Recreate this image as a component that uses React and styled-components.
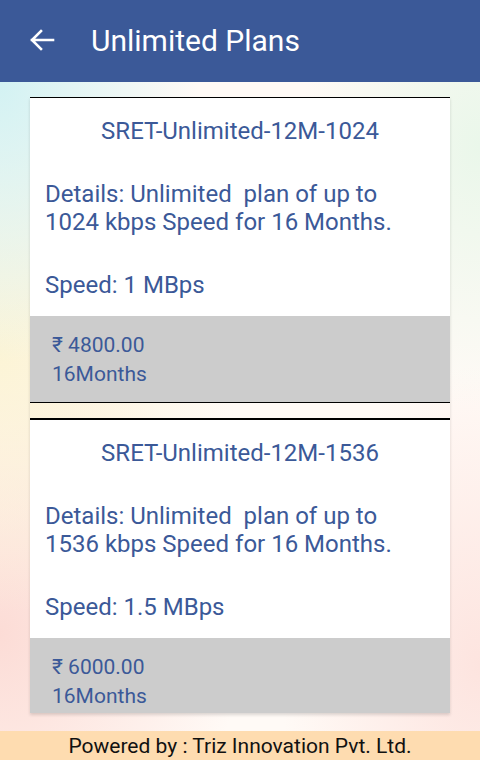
import React from "react";
import styled, { createGlobalStyle } from "styled-components";

const plans = [
  {
    id: 1,
    name: "SRET-Unlimited-12M-1024",
    details: "Details: Unlimited  plan of up to 1024 kbps Speed for 16 Months.",
    speed: "Speed: 1 MBps",
    price: "4800.00",
    validity: "16Months",
  },
  {
    id: 2,
    name: "SRET-Unlimited-12M-1536",
    details: "Details: Unlimited  plan of up to 1536 kbps Speed for 16 Months.",
    speed: "Speed: 1.5 MBps",
    price: "6000.00",
    validity: "16Months",
  },
];

const App = () => {
  return (
    <>
      <GlobalStyle />
      <Screen>
        <AppBar>
          <BackButton aria-label="back">
            <svg width="26" height="22" viewBox="0 0 26 22" fill="none">
              <path
                d="M24 11H3M12 2L3 11l9 9"
                stroke="#fff"
                strokeWidth="2.6"
                strokeLinecap="square"
              />
            </svg>
          </BackButton>
          <Title>Unlimited Plans</Title>
        </AppBar>

        <Content>
          <Viewport>
            {plans.map((plan, i) => (
              <PlanCard key={plan.id} $first={i === 0}>
                <PlanBody>
                  <PlanName>{plan.name}</PlanName>
                  <PlanDetails>{plan.details}</PlanDetails>
                  <PlanSpeed>{plan.speed}</PlanSpeed>
                </PlanBody>
                <PriceBox>
                  <Price>₹ {plan.price}</Price>
                  <Validity>{plan.validity}</Validity>
                </PriceBox>
              </PlanCard>
            ))}
          </Viewport>
        </Content>

        <Footer>Powered by : Triz Innovation Pvt. Ltd.</Footer>
      </Screen>
    </>
  );
};

const GlobalStyle = createGlobalStyle`
  html, body {
    margin: 0;
    padding: 0;
  }
  body {
    font-family: Roboto, "Liberation Sans", sans-serif;
  }
`;

const Screen = styled.div`
  width: 480px;
  height: 760px;
  display: flex;
  flex-direction: column;
  overflow: hidden;
`;

const AppBar = styled.header`
  height: 82px;
  flex-shrink: 0;
  display: flex;
  align-items: center;
  background-color: #3b5998;
  padding-left: 29px;
  box-sizing: border-box;
`;

const BackButton = styled.div`
  width: 26px;
  height: 22px;
  display: flex;
  margin-top: -3px;
`;

const Title = styled.h1`
  margin: -2px 0 0 36px;
  font-size: 30px;
  font-weight: 400;
  color: #fff;
`;

const Content = styled.main`
  flex: 1;
  min-height: 0;
  display: flex;
  flex-direction: column;
  padding: 15px 30px 18px;
  box-sizing: border-box;
  background:
    radial-gradient(ellipse 200px 280px at 0% 0%, #d3f2f3 0%, rgba(211, 242, 243, 0) 100%),
    radial-gradient(ellipse 240px 260px at 0% 42%, #fcf4d6 0%, rgba(252, 244, 214, 0) 100%),
    radial-gradient(ellipse 240px 300px at 0% 85%, #fcdcd6 0%, rgba(252, 220, 214, 0) 100%),
    radial-gradient(ellipse 180px 260px at 100% 10%, #eaf7ea 0%, rgba(234, 247, 234, 0) 100%),
    radial-gradient(ellipse 200px 300px at 100% 90%, #fde4df 0%, rgba(253, 228, 223, 0) 100%),
    #fffaf6;
`;

const Viewport = styled.div`
  flex: 1;
  min-height: 0;
  overflow: hidden;
  box-shadow: 0 2px 3px rgba(0, 0, 0, 0.14);
`;

const PlanCard = styled.section`
  border-top: ${({ $first }) => ($first ? "1px" : "2px")} solid #000;
  border-bottom: 1px solid #000;
  margin-bottom: 15px;
  background: #fff;
`;

const PlanBody = styled.div`
  padding: 19px 38px 17px 13px;
  margin: 0 1px 0 2px;
  color: #3b5998;
  font-size: 24px;
  line-height: 28px;
`;

const PlanName = styled.div`
  text-align: center;
  font-size: 24px;
  margin-right: -24px;
`;

const PlanDetails = styled.p`
  margin: 35px 0 0;
  white-space: pre-wrap;
`;

const PlanSpeed = styled.p`
  margin: 35px 0 0;
`;

const PriceBox = styled.div`
  background-color: #cccccc;
  padding: 15px 22px 13px;
  color: #3b5998;
  font-size: 21px;
  line-height: 29px;
`;

const Price = styled.div``;

const Validity = styled.div``;

const Footer = styled.footer`
  height: 29px;
  flex-shrink: 0;
  background-color: #fedcb0;
  color: #111;
  font-size: 21px;
  line-height: 31px;
  text-align: center;
  overflow: hidden;
`;

export default App;
